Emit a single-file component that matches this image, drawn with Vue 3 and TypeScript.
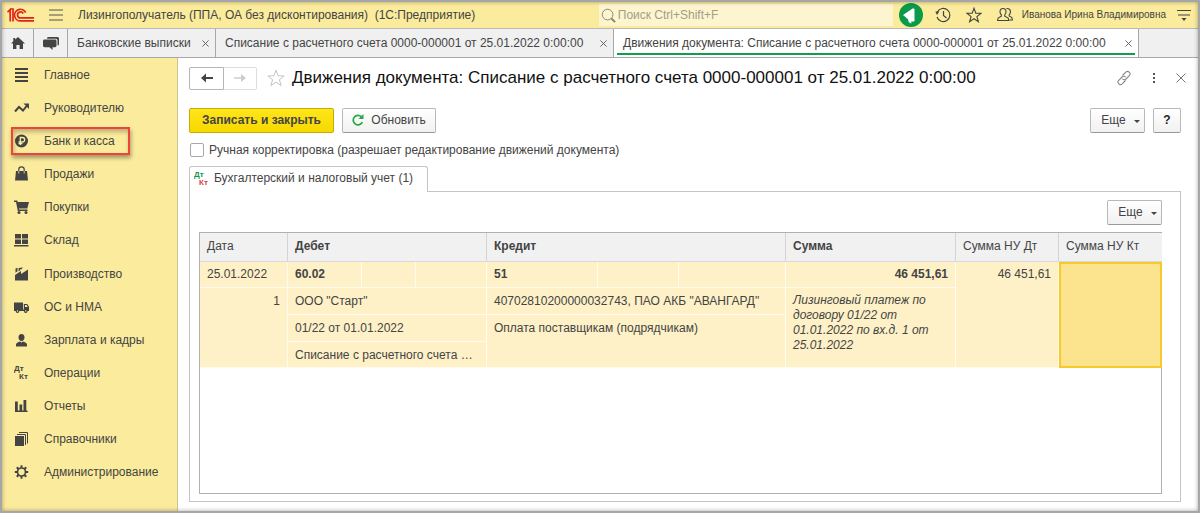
<script setup lang="ts">
import { ref } from 'vue'

interface Section { id: string; title: string; marked?: boolean }
interface Tab { title: string; width: number; active: boolean }

const sections: Section[] = [
  { id: 'main', title: 'Главное' },
  { id: 'trend', title: 'Руководителю' },
  { id: 'bank', title: 'Банк и касса', marked: true },
  { id: 'sales', title: 'Продажи' },
  { id: 'cart', title: 'Покупки' },
  { id: 'stock', title: 'Склад' },
  { id: 'factory', title: 'Производство' },
  { id: 'truck', title: 'ОС и НМА' },
  { id: 'person', title: 'Зарплата и кадры' },
  { id: 'dtkt', title: 'Операции' },
  { id: 'chart', title: 'Отчеты' },
  { id: 'books', title: 'Справочники' },
  { id: 'gear', title: 'Администрирование' },
]

const tabs: Tab[] = [
  { title: 'Банковские выписки', width: 148, active: false },
  { title: 'Списание с расчетного счета 0000-000001 от 25.01.2022 0:00:00', width: 398, active: false },
  { title: 'Движения документа: Списание с расчетного счета 0000-000001 от 25.01.2022 0:00:00', width: 525, active: true },
]

const columnWidths: number[] = [88, 74, 54, 71, 111, 81, 107, 170, 103, 103]
const gearTeeth: number[] = [0, 45, 90, 135, 180, 225, 270, 315]
const manual = ref(false)
const search = ref('')
</script>

<template>
  <div class="app">
    <header class="titlebar">
      <svg class="logo" viewBox="0 0 27 14" width="27" height="14" aria-label="1С">
        <g fill="none" stroke="#e2231a" stroke-width="1.7">
          <path d="M0.5 4.2 3.2 1.6V13.5M3 1h3v12.5" />
          <path d="M18.6 4.6A5.8 5.8 0 1 0 14 12.9H27" />
          <path d="M16.2 5.6A3 3 0 1 0 14 9.9H27" />
        </g>
      </svg>
      <button class="plain burger" aria-label="Меню">
        <svg viewBox="0 0 14 12" width="14" height="12" stroke="#555" stroke-width="1.2"><path d="M0 1h14M0 6h14M0 11h14" /></svg>
      </button>
      <span class="app-name">Лизингополучатель (ППА, ОА без дисконтирования)&nbsp; (1С:Предприятие)</span>
      <label class="search">
        <svg viewBox="0 0 16 16" width="15" height="15" fill="none" stroke="#85806a"><circle cx="7" cy="7" r="5.7" /><path d="m11 11 4 4" stroke-width="2" /></svg>
        <input v-model="search" type="text" placeholder="Поиск Ctrl+Shift+F" aria-label="Поиск">
      </label>
      <button class="plain horn" aria-label="Объявления">
        <svg viewBox="0 0 24 24" width="24" height="24"><circle cx="12" cy="12" r="12" fill="#0a9a4a" /><path d="M4 12 14 5.3 15.5 6v12l-1.5.8L12.5 18l-.2 2.5-2.5-1.2-.8-3z" fill="#fff" /></svg>
      </button>
      <button class="plain" aria-label="История">
        <svg viewBox="0 0 16 16" width="16" height="16" fill="none" stroke="#444" stroke-width="1.2"><path d="M2.4 5A6.6 6.6 0 1 1 2 10M8.5 4v4.5l3 2.5" /><path d="M.3 4.5h4L2 8z" fill="#444" stroke="none" /></svg>
      </button>
      <button class="plain" aria-label="Избранное">
        <svg viewBox="0 0 16 16" width="16" height="16" fill="none" stroke="#444" stroke-width="1.1"><path d="m8 1.2 1.8 4.900 5.200.2-4.100 3.300 1.500 5L8 11.700l-4.400 2.900 1.500-5L1 6.300l5.200-.2z" /></svg>
      </button>
      <button class="plain user">
        <svg viewBox="0 0 16 16" width="16" height="16" fill="none" stroke="#444" stroke-width="1.1"><path d="M6 1.500c2 0 3 1.500 3 3.300 0 1.500-.7 2.500-1.300 3.200v1.200l3.500 1.800.5 2.500H.6l.5-2.500 3.300-1.800V8C3.700 7.300 3 6.300 3 4.800c0-1.800 1-3.300 3-3.300zM9.500 1.600c2.500-.3 4 1 4 3.200 0 1.400-.6 2.200-1.300 3v1.200l2.700 1.500.5 2.500h-3" /></svg>
        <span>Иванова Ирина Владимировна</span>
      </button>
      <button class="plain options" aria-label="Настройки панели">
        <svg viewBox="0 0 14 13" width="14" height="13" stroke="#444" stroke-width="1.200"><path d="M0 1.500h14M1 6h12" /><path d="M4.500 9h5L7 12z" fill="#444" stroke="none" /></svg>
      </button>
    </header>

    <nav class="tabs" aria-label="Открытые окна">
      <button class="plain tab-icon" aria-label="Начальная страница">
        <svg viewBox="0 0 14 12" width="14" height="12" fill="#444"><path d="M7 0 14 6.500h-2V12H8.600V8H5.400v4H2V6.500H0l2.300-2.200V1h1.900v1.600z" /></svg>
      </button>
      <button class="plain tab-icon" aria-label="Обсуждения">
        <svg viewBox="0 0 16 13" width="16" height="13"><path d="M5 0h9.500Q16 0 16 1.500V7q0 1.500-1.500 1.500V3.500Q14.500 1.700 13 1.700H4Q4 0 5 0z" fill="#444" /><path d="M1.500 2.600h10.600q1.400 0 1.400 1.400v4.800q0 1.400-1.400 1.400H9.500V13l-3-2.800h-5Q0 10.200 0 8.800V4q0-1.400 1.500-1.400z" fill="#444" /></svg>
      </button>
      <div v-for="tab in tabs" :key="tab.title" class="tab" :class="{ active: tab.active }" :style="{ flexBasis: tab.width + 'px' }">
        <button class="plain">{{ tab.title }}</button>
        <button class="plain close" :aria-label="'Закрыть: ' + tab.title">
          <svg viewBox="0 0 8 8" width="7" height="7" stroke="#555"><path d="m.5.5 7 7m0-7-7 7" /></svg>
        </button>
      </div>
    </nav>

    <div class="body">
      <aside class="sidebar">
        <a v-for="s in sections" :key="s.id" href="#" class="section" :class="{ marked: s.marked }">
          <svg viewBox="0 0 16 16" width="16" height="16" fill="#444">
            <path v-if="s.id === 'main'" d="M1 2h13M1 6h13M1 10h13M1 14h13" stroke="#444" stroke-width="2" />
            <g v-else-if="s.id === 'trend'"><path d="m1 11.500 4-4.500 4 3.500 4-5" fill="none" stroke="#444" stroke-width="2" /><path d="M9.500 3.500H15V9z" /></g>
            <g v-else-if="s.id === 'bank'"><circle cx="7.500" cy="8" r="6.500" /><path d="M6.300 12V4.500h2.200a2 2 0 0 1 0 4.300H4.500M4.500 10.500h4" fill="none" stroke="#fbed9e" stroke-width="1.300" /></g>
            <g v-else-if="s.id === 'sales'"><path d="M2 5h11l1 9.500H1z" /><path d="M4.800 8V3.500a2.700 2.700 0 0 1 5.400 0V8" fill="none" stroke="#444" stroke-width="1.200" /><path d="M4.800 5v2.500M10.200 5v2.500" stroke="#fbed9e" stroke-width=".8" /></g>
            <g v-else-if="s.id === 'cart'"><path d="M0 1.500h3.200l.5 1.500H15l-1.700 6.500H5l.2 1h8.300V12H3.800L2 3H0z" /><circle cx="5" cy="13.500" r="1.500" /><circle cx="12" cy="13.500" r="1.500" /></g>
            <path v-else-if="s.id === 'stock'" d="M1 2h6v4.500H1zM8 2h6v4.500H8zM1 7.500h6V12H1zM8 7.500h6V12H8zM0 13h14.500v1.600H0z" />
            <path v-else-if="s.id === 'factory'" d="M1 14.500V9l6-4v3l7-4.500v11zM1.500 2.500l2-.8v3.500l-2 1.500zM4.600 2 9 1.500 7.500 3.300H6.200v1L4.600 5.500z" />
            <g v-else-if="s.id === 'truck'"><path d="M0 3.500h9V11H0z" /><path d="M9.800 5h3.400L15 7.800V12H9.800zM11 6v2h2.700l-1-2z" fill-rule="evenodd" /><path d="M0 10.500h15V12H0z" /><circle cx="3.500" cy="12" r="1.900" /><circle cx="11.700" cy="12" r="1.900" /><circle cx="3.500" cy="12" r=".7" fill="#fbed9e" /><circle cx="11.700" cy="12" r=".7" fill="#fbed9e" /></g>
            <path v-else-if="s.id === 'person'" d="M7.500 2c2 0 3 1.300 3 3.200S9.500 9 7.500 9s-3-1.900-3-3.800S5.500 2 7.500 2zM2 14.500v-2c0-1.500 2-2.500 4-3l1.500 1L9 9.500c2 .5 4 1.500 4 3v2z" />
            <g v-else-if="s.id === 'dtkt'" class="mini"><text x="0" y="6">Дт</text><text x="5" y="14">Кт</text></g>
            <path v-else-if="s.id === 'chart'" d="M1 3.500h2.800v9H1zM5.500 6.500h2.700v6H5.500zM9.500 2h2.800v10.500H9.500zM1 12.500h12.500V14H1z" />
            <g v-else-if="s.id === 'books'"><path d="M1 5h9v10H1z" /><path d="M3 3.500h8.500V14M5 1.500h8.500V12.500" fill="none" stroke="#444" /></g>
            <g v-else><circle cx="7.500" cy="8" r="4" fill="none" stroke="#444" stroke-width="1.700" /><path v-for="a in gearTeeth" :key="a" d="M6.500 1.300h2v2.500h-2z" :transform="`rotate(${a} 7.500 8)`" /></g>
          </svg>
          <span>{{ s.title }}</span>
        </a>
      </aside>

      <main class="content">
        <div class="heading">
          <div class="history">
            <button aria-label="Назад"><svg viewBox="0 0 14 10" width="14" height="10"><path d="M13 5H4" stroke="#444" stroke-width="2" /><path d="M6 .5 1 5l5 4.500z" fill="#444" /></svg></button>
            <button aria-label="Вперед" disabled><svg viewBox="0 0 14 10" width="14" height="10"><path d="M1 5h9" stroke="#ccc" stroke-width="1.500" /><path d="m8 1 5 4-5 4z" fill="#ccc" /></svg></button>
          </div>
          <button class="plain star" aria-label="В избранное">
            <svg viewBox="0 0 18 18" width="18" height="18" fill="none" stroke="#c4c4c4"><path d="m9 1.200 2.100 5.500 6 .3-4.700 3.700 1.700 5.900L9 13.200l-5.100 3.400 1.700-5.900L.9 7l6-.3z" /></svg>
          </button>
          <h1>Движения документа: Списание с расчетного счета 0000-000001 от 25.01.2022 0:00:00</h1>
          <div class="window-tools">
            <button class="plain" aria-label="Получить ссылку"><svg viewBox="0 0 16 16" width="16" height="16" fill="none" stroke="#888" stroke-width="1.100"><path d="m6.500 5.500 3.300-3.300c2.300-2.200 5.700 1.100 3.500 3.500L10 9C8.500 10.300 7 9.800 6.300 8.800M9.500 10.500l-3.300 3.300C3.900 16 .5 12.700 2.700 10.300L6 7c1.500-1.300 3-.8 3.700.2" /></svg></button>
            <button class="plain" aria-label="Действия"><svg viewBox="0 0 4 12" width="4" height="12" fill="#555"><path d="M1 1h2v2H1zM1 5h2v2H1zM1 9h2v2H1z" /></svg></button>
            <button class="plain" aria-label="Закрыть"><svg viewBox="0 0 10 10" width="10" height="10" stroke="#777"><path d="m.5.5 9 9m0-9-9 9" /></svg></button>
          </div>
        </div>

        <div class="commands">
          <button class="btn primary">Записать и закрыть</button>
          <button class="btn refresh">
            <svg viewBox="0 0 12 12" width="12" height="12"><path d="M10.300 8A4.700 4.700 0 1 1 9.300 2.800" fill="none" stroke="#2ba745" stroke-width="1.700" /><path d="M11.500 0v5h-5z" fill="#2ba745" /></svg>
            <span>Обновить</span>
          </button>
          <button class="btn more right">Еще<i class="caret"></i></button>
          <button class="btn help">?</button>
        </div>

        <label class="manual">
          <input v-model="manual" type="checkbox">
          <span>Ручная корректировка (разрешает редактирование движений документа)</span>
        </label>

        <div class="page-tabs">
          <button class="page-tab">
            <svg viewBox="0 0 16 16" width="16" height="16" class="mini"><text x="0" y="7" fill="#16994a">Дт</text><text x="5" y="15" fill="#dd4040">Кт</text></svg>
            <span>Бухгалтерский и налоговый учет (1)</span>
          </button>
        </div>

        <section class="panel">
          <button class="btn more">Еще<i class="caret"></i></button>
          <div class="grid">
            <table>
              <colgroup><col v-for="(w, i) in columnWidths" :key="i" :style="{ width: w + 'px' }"></colgroup>
              <thead>
                <tr>
                  <th>Дата</th>
                  <th colspan="3" class="bold">Дебет</th>
                  <th colspan="3" class="bold">Кредит</th>
                  <th class="bold">Сумма</th>
                  <th>Сумма НУ Дт</th>
                  <th>Сумма НУ Кт</th>
                </tr>
              </thead>
              <tbody>
                <tr>
                  <td>25.01.2022</td>
                  <td class="bold">60.02</td><td></td><td></td>
                  <td class="bold">51</td><td></td><td></td>
                  <td class="bold num">46 451,61</td>
                  <td rowspan="4" class="num">46 451,61</td>
                  <td rowspan="4" class="selected"></td>
                </tr>
                <tr>
                  <td rowspan="3" class="num">1</td>
                  <td colspan="3">ООО "Старт"</td>
                  <td colspan="3">40702810200000032743, ПАО АКБ "АВАНГАРД"</td>
                  <td rowspan="3" class="note">Лизинговый платеж по договору 01/22 от 01.01.2022 по вх.д. 1 от 25.01.2022</td>
                </tr>
                <tr>
                  <td colspan="3">01/22 от 01.01.2022</td>
                  <td colspan="3" rowspan="2">Оплата поставщикам (подрядчикам)</td>
                </tr>
                <tr>
                  <td colspan="3">Списание с расчетного счета …</td>
                </tr>
              </tbody>
            </table>
          </div>
        </section>
      </main>
    </div>
  </div>
</template>

<style>
body { margin: 0; }
</style>

<style scoped>
* { box-sizing: border-box; }
.app {
  position: relative;
  display: flex;
  flex-direction: column;
  min-height: 100vh;
  border: 2px solid #a6a6a6;
  background: #fff;
  color: #444;
  font: 12px/16px "Liberation Sans", Arial, sans-serif;
}
.app::after {
  content: "";
  position: absolute;
  inset: 0;
  pointer-events: none;
  box-shadow: inset 0 0 4px rgba(0, 0, 0, 0.35);
}
button { font: inherit; color: inherit; cursor: pointer; }
svg { display: block; flex: none; }
.plain { padding: 0; border: 0; background: none; white-space: nowrap; }

.titlebar {
  display: flex;
  align-items: center;
  height: 26px;
  padding: 0 7px 0 5px;
  gap: 15px;
  background: #fbeb9c;
}
.app-name { flex: 1; white-space: nowrap; overflow: hidden; }
.search {
  display: flex;
  align-items: center;
  width: 294px;
  height: 22px;
  padding-left: 2px;
  gap: 2px;
  background: #fdf5d0;
}
.search input {
  flex: 1;
  min-width: 0;
  padding: 0;
  border: 0;
  outline: 0;
  background: none;
  font: inherit;
}
.search input::placeholder { color: #a39d85; opacity: 1; }
.horn { margin: 0 -3px 0 -9px; }
.user { display: flex; align-items: center; gap: 9px; font-size: 10px; }
.options { margin-left: -4px; }

.tabs {
  display: flex;
  height: 30px;
  border-top: 1px solid #b9b9b9;
  border-bottom: 1px solid #a8a8a8;
  background: #f0f0f0;
}
.tab-icon, .tab { display: flex; align-items: center; border-right: 1px solid #a8a8a8; }
.tab-icon { width: 32px; justify-content: center; }
.tab-icon + .tab-icon { width: 34px; }
.tab { position: relative; justify-content: space-between; padding: 0 6px 0 9px; }
.tab.active { background: #fff; }
.tab.active::after {
  content: "";
  position: absolute;
  left: 3px;
  right: 3px;
  bottom: 2px;
  height: 2px;
  background: #0f9d4e;
}

.body { flex: 1; display: flex; }
.sidebar {
  display: flex;
  flex-direction: column;
  flex: none;
  width: 176px;
  padding-bottom: 22px;
  border-right: 1px solid #cfc58c;
  background: #fbeb9c;
}
.section {
  position: relative;
  flex: 1;
  display: flex;
  align-items: center;
  padding-left: 12px;
  gap: 14px;
  color: #444;
  text-decoration: none;
}
.section.marked::after {
  content: "";
  position: absolute;
  inset: 3px 47px 2px 9px;
  border: 2px solid #f0433c;
  box-shadow: 1px 3px 4px rgba(0, 0, 0, 0.35), inset 1px 3px 4px rgba(0, 0, 0, 0.25);
}
.mini { font-size: 8px; font-weight: bold; }

.content {
  flex: 1;
  min-width: 0;
  display: flex;
  flex-direction: column;
  padding: 8px 17px 9px 11px;
}
.heading { display: flex; align-items: center; height: 24px; }
.history { display: flex; }
.history button {
  display: flex;
  align-items: center;
  justify-content: center;
  width: 35px;
  height: 23px;
  padding: 0;
  border: 1px solid #b5b5b5;
  border-radius: 2px 0 0 2px;
  background: #fff;
}
.history button + button { width: 33px; border-color: #ddd; border-left: 0; border-radius: 0 2px 2px 0; }
.star { margin: 0 7px 0 10px; }
h1 {
  flex: 1;
  margin: 0;
  color: #111;
  font-size: 17px;
  font-weight: normal;
  line-height: 24px;
  white-space: nowrap;
}
.window-tools { display: flex; align-items: center; gap: 20px; margin-right: -5px; }

.commands { display: flex; gap: 8px; margin-top: 18px; }
.btn {
  display: flex;
  align-items: center;
  justify-content: center;
  height: 25px;
  padding: 0 0 1px;
  border: 1px solid #b8b8b8;
  border-bottom-color: #999;
  border-radius: 2px;
  background: linear-gradient(#fff, #f1f1f1);
}
.primary {
  width: 145px;
  border-color: #c9ab00;
  background: linear-gradient(#ffe61a, #f7d800);
  font-weight: bold;
}
.refresh { width: 94px; gap: 7px; }
.more { width: 55px; padding-left: 6px; gap: 8px; }
.right { margin-left: auto; }
.caret { margin-top: 3px; border: 3px solid transparent; border-top-color: #444; border-bottom: 0; }
.help { width: 28px; font-weight: bold; color: #222; }

.manual { display: flex; align-items: center; gap: 5px; height: 18px; margin-top: 8px; }
.manual input {
  appearance: none;
  width: 14px;
  height: 14px;
  margin: 0 0 0 1px;
  border: 1px solid #a8a8a8;
  border-radius: 2px;
  background: #fff;
}
.manual input:checked { background: #0f9d4e; }

.page-tabs { display: flex; margin-top: 7px; }
.page-tab {
  position: relative;
  z-index: 1;
  display: flex;
  align-items: center;
  height: 26px;
  margin-bottom: -1px;
  padding: 0 14px 3px 4px;
  gap: 4px;
  border: 1px solid #c4c4c4;
  border-bottom: 0;
  border-radius: 3px 3px 0 0;
  background: #fff;
}
.panel {
  flex: 1;
  display: flex;
  flex-direction: column;
  padding: 8px 18px 7px 9px;
  border: 1px solid #c4c4c4;
}
.panel .more { align-self: flex-end; }
.grid { flex: 1; margin-top: 7px; border: 1px solid #b0b0b0; }
table { width: 100%; border-collapse: separate; border-spacing: 0; table-layout: fixed; }
th {
  height: 29px;
  padding: 0 7px 2px;
  border-right: 1px solid #d4d4d4;
  border-bottom: 1px solid #d9d9d9;
  background: #f1f1f1;
  font-weight: normal;
  text-align: left;
  white-space: nowrap;
}
td {
  height: 27px;
  padding: 5px 7px 4px;
  border-right: 1px solid #fffbef;
  border-bottom: 1px solid #fffbef;
  background: #fef1c7;
  line-height: 16px;
  vertical-align: top;
  white-space: nowrap;
}
tbody tr:first-child td { height: 26px; padding-top: 4px; }
tbody tr:last-child td { height: 26px; }
.bold { font-weight: bold; }
.num { text-align: right; }
td.note { font-style: italic; line-height: 15px; white-space: normal; }
td.selected { border: 2px solid #f9c929; background: #fbe48d; }
th:last-child { border-right: 0; }
</style>
